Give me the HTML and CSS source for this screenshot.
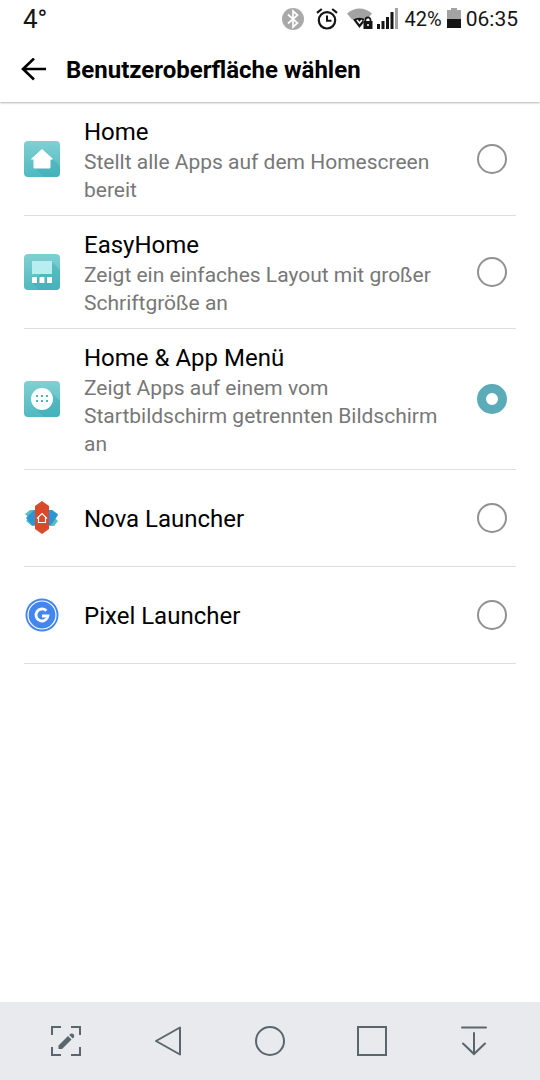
FILE: index.html
```html
<!DOCTYPE html>
<html lang="de">
<head>
    <meta charset="UTF-8">
    <meta name="viewport" content="width=device-width, initial-scale=1.0">
    <title>Benutzeroberfläche wählen</title>
    <link rel="stylesheet" href="styles.css">
</head>
<body>
    <div class="status-bar">
        <span class="temperature">4°</span>
        <div class="status-icons">
            <svg class="bluetooth" width="22" height="22" viewBox="0 0 22 22">
                <circle cx="11" cy="11" r="11" fill="#a9a9a9"/>
                <path d="M6 6.5l9.5 8.5-4.5 4V3l4.5 4L6 15.5" fill="none" stroke="#fff" stroke-width="1.7"/>
            </svg>
            <svg class="alarm" width="22" height="22" viewBox="0 0 22 22" fill="none" stroke="#151515">
                <circle cx="11" cy="12.3" r="8.2" stroke-width="2.2"/>
                <path d="M11 7.5v5.3h4.5" stroke-width="2"/>
                <path d="M1 4.8L5.8 1M21 4.8L16.2 1" stroke-width="2.2"/>
            </svg>
            <svg class="wifi" width="26" height="22" viewBox="0 0 26 22">
                <path d="M0 5.5Q12.5-4.5 25 5.5L20 11.5H5z" fill="#a3a3a3"/>
                <path d="M6 11.5Q12.5 8 19 11.5L12.5 20z" fill="#151515"/>
                <path d="M10 12l2.500 3 2.500-3" fill="none" stroke="#fff" stroke-width="1.5"/>
                <path d="M17 14v-1a3.500 3.500 0 0 1 7 0v1" fill="none" stroke="#fff" stroke-width="1"/>
                <path d="M16.5 13h9v8h-9z" fill="#151515"/>
                <path d="M18.3 14v-2a2.6 2.6 0 0 1 5.2 0v2" fill="none" stroke="#151515" stroke-width="1.8"/>
                <circle cx="21" cy="17" r="1" fill="#fff"/>
            </svg>
            <svg class="signal" width="21" height="22" viewBox="0 0 21 22" fill="#151515">
                <path d="M0 16h3v5H0zM4.5 13h3v8h-3zM9 9h3v12H9zM13.5 4h3v17h-3z"/>
                <path d="M18 0h3v21h-3z" fill="#a3a3a3"/>
            </svg>
            <span class="percent">42%</span>
            <svg class="battery" width="14" height="22" viewBox="0 0 14 22">
                <path d="M0 2h4V0h6v2h4v9H0z" fill="#a3a3a3"/>
                <path d="M0 11h14v9H0z" fill="#151515"/>
            </svg>
            <span class="clock">06:35</span>
        </div>
    </div>

    <header class="header">
        <button class="back" type="button" aria-label="Zurück">
            <svg width="26" height="24" viewBox="0 0 26 24" fill="none" stroke="#000" stroke-width="2.6">
                <path d="M26 11H3M14 .5L3 11l11 10.5"/>
            </svg>
        </button>
        <h1>Benutzeroberfläche wählen</h1>
    </header>

    <main class="launcher-list">
        <label class="launcher">
            <svg class="launcher-icon" viewBox="0 0 36 36">
                <defs>
                    <linearGradient id="teal" x1="0" y1="0" x2="0" y2="1">
                        <stop offset="0" stop-color="#80d0d2"/>
                        <stop offset="1" stop-color="#4fb9c1"/>
                    </linearGradient>
                </defs>
                <rect width="36" height="36" rx="4" fill="url(#teal)"/>
                <path d="M10 26l10 10h12q4 0 4-4V25l-7-7z" fill="#36a8b4" opacity=".4"/>
                <path d="M18 8.5L7.5 18H10v9h16v-9h2.5z" fill="#fff" stroke="#fff" stroke-linejoin="round"/>
            </svg>
            <span class="launcher-text">
                <span class="launcher-name">Home</span>
                <span class="launcher-info">Stellt alle Apps auf dem Homescreen bereit</span>
            </span>
            <input type="radio" name="launcher" value="home">
        </label>

        <label class="launcher">
            <svg class="launcher-icon" viewBox="0 0 36 36">
                <rect width="36" height="36" rx="4" fill="url(#teal)"/>
                <path d="M8 29l7 7h17q4 0 4-4V16l-8-8z" fill="#36a8b4" opacity=".4"/>
                <path d="M8 7h20v13H8z" fill="#b9eef0"/>
                <path d="M8 23h5v6H8zM15.5 23h5v6h-5zM23 23h5v6h-5z" fill="#fff"/>
            </svg>
            <span class="launcher-text">
                <span class="launcher-name">EasyHome</span>
                <span class="launcher-info">Zeigt ein einfaches Layout mit großer Schriftgröße an</span>
            </span>
            <input type="radio" name="launcher" value="easyhome">
        </label>

        <label class="launcher">
            <svg class="launcher-icon" viewBox="0 0 36 36">
                <rect width="36" height="36" rx="4" fill="url(#teal)"/>
                <path d="M10 26l10 10h12q4 0 4-4V20L26 10z" fill="#36a8b4" opacity=".4"/>
                <circle cx="18" cy="18" r="11" fill="#fff"/>
                <path d="M12 14h2v2h-2zM17 14h2v2h-2zM22 14h2v2h-2zM12 19h2v2h-2zM17 19h2v2h-2zM22 19h2v2h-2z" fill="#4ab3bc"/>
            </svg>
            <span class="launcher-text">
                <span class="launcher-name">Home &amp; App Menü</span>
                <span class="launcher-info">Zeigt Apps auf einem vom Startbildschirm getrennten Bildschirm an</span>
            </span>
            <input type="radio" name="launcher" value="app-menu" checked>
        </label>

        <label class="launcher">
            <svg class="launcher-icon" viewBox="0 0 36 36">
                <path d="M6 10h10v16H8l-6-5 3-3-4-4zM30 26H20V10h8l6 4-3 4 3 3z" fill="#55c0bd"/>
                <path d="M10 10h18l6 5-7 10H8l-6-7z" fill="#2d94d6"/>
                <path d="M18 1l7 5v23l-7 5-7-5V6z" fill="#d94a2b"/>
                <path d="M13 18.5l5-5 5 5M14.5 17.5v5h7v-5" fill="none" stroke="#fff" stroke-width="1.2"/>
            </svg>
            <span class="launcher-text">
                <span class="launcher-name">Nova Launcher</span>
            </span>
            <input type="radio" name="launcher" value="nova">
        </label>

        <label class="launcher">
            <svg class="launcher-icon" viewBox="0 0 36 36">
                <circle cx="18" cy="18" r="16.5" fill="#4486ef"/>
                <circle cx="18" cy="18" r="14" fill="none" stroke="#fff" stroke-width="1.2"/>
                <path d="M22.3 13.8A6 6 0 1 0 23.9 19H18" fill="none" stroke="#fff" stroke-width="2.8"/>
            </svg>
            <span class="launcher-text">
                <span class="launcher-name">Pixel Launcher</span>
            </span>
            <input type="radio" name="launcher" value="pixel">
        </label>
    </main>

    <nav class="nav-bar">
        <button type="button" aria-label="Capture+">
            <svg viewBox="0 0 32 32">
                <path d="M2 10V2h9M21 2h9v8M30 22v8h-9M11 30H2v-8"/>
                <path class="solid" d="M8.5 20.5L18 11l3.5 3.5L12 24H8.5zM19.2 10l1.3-1.3q1.8-.8 3 .4t.5 3.2l-1.2 1.300z"/>
            </svg>
        </button>
        <button type="button" aria-label="Zurück">
            <svg viewBox="0 0 32 32" stroke-linejoin="round"><path d="M28 2.5v27L4 16z"/></svg>
        </button>
        <button type="button" aria-label="Startseite">
            <svg viewBox="0 0 32 32"><circle cx="16" cy="16" r="14"/></svg>
        </button>
        <button type="button" aria-label="Übersicht">
            <svg viewBox="0 0 32 32"><path d="M2 2h28v28H2z"/></svg>
        </button>
        <button type="button" aria-label="Leiste ausblenden">
            <svg viewBox="0 0 32 32" stroke-linecap="round"><path d="M4 2.5h24M16 8v21M5 18.5L16 29l11-10.5"/></svg>
        </button>
    </nav>
</body>
</html>
```

FILE: styles.css
```css
* {
    box-sizing: border-box;
}
body {
    margin: 0;
    min-height: 100vh;
    display: flex;
    flex-direction: column;
    font-family: Roboto, sans-serif;
    background-color: #fff;
    color: #000;
}
button {
    border: none;
    background: none;
    padding: 0;
    cursor: pointer;
}
svg {
    display: block;
    flex: none;
}
.status-bar {
    display: flex;
    justify-content: space-between;
    align-items: center;
    height: 37px;
    padding: 0 22px 0 23px;
    color: #151515;
}
.temperature {
    font-size: 26px;
}
.status-icons {
    display: flex;
    align-items: center;
}
.alarm {
    margin-left: 12px;
}
.wifi {
    margin-left: 9px;
}
.signal {
    margin-left: 4px;
}
.percent {
    margin-left: 7px;
    font-size: 20px;
}
.battery {
    margin: 0 5px 0 5px;
}
.clock {
    font-size: 21px;
}
.header {
    display: flex;
    align-items: center;
    gap: 20px;
    height: 65px;
    padding: 0 20px;
    box-shadow: 0 1px 2px rgba(0, 0, 0, 0.3);
    clip-path: inset(0 0 -4px);
}
.header h1 {
    margin: 0;
    font-size: 24px;
    font-weight: 700;
}
.launcher-list {
    flex: 1;
    padding: 1px 24px 0;
}
.launcher {
    display: flex;
    align-items: center;
    min-height: 97px;
    padding-right: 9px;
    border-bottom: 1px solid #dedede;
    cursor: pointer;
}
.launcher-icon {
    width: 36px;
    height: 36px;
}
.launcher-text {
    flex: 1;
    margin: 0 36px 0 24px;
    padding: 14px 0 11px;
}
.launcher-name {
    display: block;
    font-size: 24px;
    line-height: 31px;
}
.launcher-info {
    display: block;
    font-size: 21px;
    line-height: 28px;
    color: #777;
}
.launcher input {
    appearance: none;
    flex: none;
    width: 30px;
    height: 30px;
    margin: 0;
    border: 2px solid #919191;
    border-radius: 50%;
}
.launcher input:checked {
    border: 9px solid #5babb9;
}
.nav-bar {
    display: flex;
    justify-content: space-between;
    align-items: center;
    height: 78px;
    padding: 0 50px;
    background-color: #e8eaed;
}
.nav-bar svg {
    width: 32px;
    height: 32px;
    fill: none;
    stroke: #59666d;
    stroke-width: 2;
}
.nav-bar .solid {
    fill: #59666d;
    stroke: none;
}
```
